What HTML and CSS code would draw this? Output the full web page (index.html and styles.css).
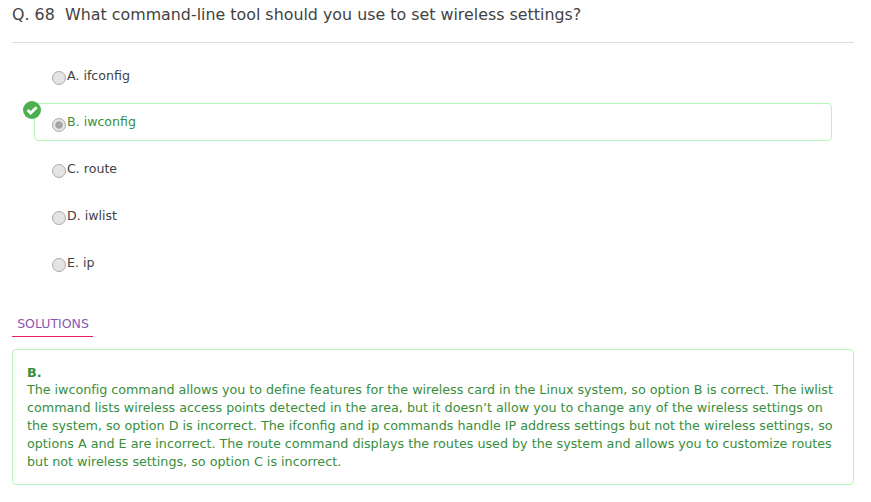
FILE: index.html
```
<!DOCTYPE html>
<html lang="en">
<head>
<meta charset="utf-8">
<title>Question 68</title>
<link rel="stylesheet" href="styles.css">
</head>
<body>
<main class="page">
  <h1 class="question"><span class="number">Q. 68</span>What command-line tool should you use to set wireless settings?</h1>
  <div class="options">
    <div class="option first"><span class="radio"></span><span class="label">A. ifconfig</span></div>
    <div class="option correct">
      <svg class="badge" viewBox="0 0 18 18"><circle cx="9" cy="9" r="9" fill="#4caf50"/><path d="M4.6 9 7.7 12.1 13.7 6.3" fill="none" stroke="#fff" stroke-width="2.8"/></svg>
      <span class="radio checked"></span><span class="label">B. iwconfig</span>
    </div>
    <div class="option low"><span class="radio"></span><span class="label">C. route</span></div>
    <div class="option low"><span class="radio"></span><span class="label">D. iwlist</span></div>
    <div class="option low"><span class="radio"></span><span class="label">E. ip</span></div>
  </div>
  <h2 class="tab">SOLUTIONS</h2>
  <section class="solution">
    <strong>B.</strong>
    <p><span class="tight">The iwconfig command allows you to define features for the wireless card in the Linux system, so option B is correct. The iwlist</span><br>command lists wireless access points detected in the area, but it doesn’t allow you to change any of the wireless settings on<br>the system, so option D is incorrect. The ifconfig and ip commands handle IP address settings but not the wireless settings, so<br>options A and E are incorrect. The route command displays the routes used by the system and allows you to customize routes<br>but not wireless settings, so option C is incorrect.</p>
  </section>
</main>
</body>
</html>
```
FILE: styles.css
```
* { box-sizing: border-box; }
body { margin: 0; background: #fff; color: #424242; font: 12.6px/18px "DejaVu Sans", sans-serif; }
.page { width: 842px; margin-left: 12px; }
.question { height: 43px; margin: 0; padding-top: 4px; border-bottom: 1px solid #ddd; font-size: 15.87px; font-weight: 400; line-height: 22px; white-space: nowrap; }
.number { margin-right: 10.3px; }
.options { padding: 13px 22px 0; }
.option { position: relative; display: flex; align-items: flex-start; height: 38px; margin-bottom: 9px; padding: 9px 0 0 17px; border: 1px solid transparent; border-radius: 4px; }
.correct { border-color: #b5f7b9; color: #388e3c; }
.radio { width: 14px; height: 14px; margin: 5px 1px 0 0; border: 1px solid #aaa; border-radius: 50%; background: #e4e4e4; }
.first .label { margin-top: 1px; }
.low .radio { margin-top: 4px; }
.checked { background: radial-gradient(circle, #a8a8a8 0 2px, #999 3px, #e4e4e4 4.2px); }
.badge { position: absolute; left: -12px; top: -3px; width: 18px; height: 18px; }
.tab { width: 81px; height: 24px; margin: 31px 0 12px; padding-left: 1px; border-bottom: 1px solid #e91e63; color: #8b56b0; font-size: 12.5px; font-weight: 400; line-height: 22px; text-align: center; }
.solution { height: 136px; padding: 14px; border: 1px solid #b5f7b9; border-radius: 4px; color: #388e3c; font-size: 12.73px; white-space: nowrap; }
.solution strong { display: block; height: 17px; }
.solution p { margin: 0; }
.tight { letter-spacing: -0.03px; }
```
